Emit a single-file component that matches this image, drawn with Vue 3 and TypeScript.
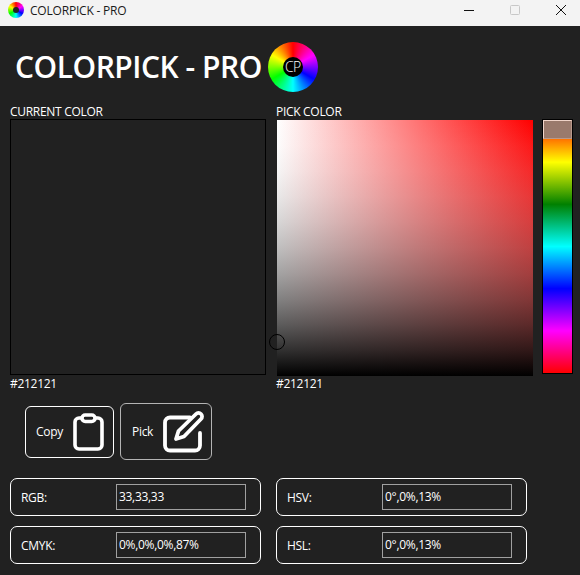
<script setup lang="ts">
const rows = [
  { label: 'RGB:', value: '33,33,33' },
  { label: 'HSV:', value: '0°,0%,13%' },
  { label: 'CMYK:', value: '0%,0%,0%,87%' },
  { label: 'HSL:', value: '0°,0%,13%' },
]
</script>

<template>
  <div class="window">
    <header class="titlebar">
      <span class="app-icon"><span class="app-icon-hole"></span></span>
      <span class="app-name">COLORPICK - PRO</span>
      <div class="controls">
        <svg class="ctl" width="12" height="12" viewBox="0 0 12 12"><path d="M1 6.500h10" stroke="#111" stroke-width="1" fill="none" /></svg>
        <svg class="ctl" width="12" height="12" viewBox="0 0 12 12"><rect x="1.500" y="1.500" width="9" height="9" rx="1" stroke="#c8c8c8" stroke-width="1" fill="none" /></svg>
        <svg class="ctl" width="12" height="12" viewBox="0 0 12 12"><path d="M1 1l10 10M11 1L1 11" stroke="#111" stroke-width="1" fill="none" /></svg>
      </div>
    </header>

    <main class="content">
      <div class="brand">
        <h1>COLORPICK - PRO</h1>
        <div class="wheel"><span class="wheel-core">CP</span></div>
      </div>

      <section class="pickers">
        <div class="col">
          <div class="cap">CURRENT COLOR</div>
          <div class="swatch"></div>
          <div class="hex">#212121</div>
        </div>
        <div class="col col-pick">
          <div class="cap">PICK COLOR</div>
          <div class="square"><span class="cursor"></span></div>
          <div class="hex">#212121</div>
        </div>
        <div class="hue"><span class="hue-thumb"></span></div>
      </section>

      <section class="actions">
        <button class="btn btn-copy">
          <span>Copy</span>
          <svg width="32" height="38" viewBox="0 0 32 38" fill="none" stroke="#fff" stroke-width="3.600" stroke-linejoin="round" stroke-linecap="round">
            <path d="M8 5H6a4 4 0 0 0-4 4v23a4 4 0 0 0 4 4h19a4 4 0 0 0 4-4V9a4 4 0 0 0-4-4h-2" />
            <rect x="9" y="2" width="13" height="6.500" rx="3.200" />
          </svg>
        </button>
        <button class="btn btn-pick">
          <span>Pick</span>
          <svg width="42" height="42" viewBox="0 0 42 42" fill="none" stroke="#fff" stroke-width="3.800" stroke-linejoin="round" stroke-linecap="round">
            <path d="M28 6.500H8a5 5 0 0 0-5 5v23a5 5 0 0 0 5 5h25a5 5 0 0 0 5-5V22" />
            <path d="M34 3a3.500 3.500 0 0 1 5 5L22 25.500 14 28l2.500-8z" />
          </svg>
        </button>
      </section>

      <section class="values">
        <div v-for="row in rows" :key="row.label" class="card">
          <span class="card-label">{{ row.label }}</span>
          <div class="field">{{ row.value }}</div>
        </div>
      </section>
    </main>
  </div>
</template>

<style>
html, body { margin: 0; background: #212121; }
</style>

<style scoped>
.window {
  width: 580px;
  height: 575px;
  overflow: hidden;
  background: #212121;
  color: #fff;
  font-family: "Open Sans", "Noto Sans", sans-serif;
  font-size: 12px;
  letter-spacing: -0.3px;
}
.titlebar {
  height: 26px;
  background: #f3f3f3;
  color: #1a1a1a;
  display: flex;
  align-items: center;
  padding: 0 0 6px 8px;
  box-sizing: border-box;
}
.app-icon {
  width: 16px;
  height: 16px;
  border-radius: 50%;
  background: conic-gradient(#f00, #f0f, #00f, #0ff, #0f0, #ff0, #f00);
  display: flex;
  align-items: center;
  justify-content: center;
}
.app-icon-hole {
  width: 6px;
  height: 6px;
  border-radius: 50%;
  background: #222;
}
.app-name {
  margin-left: 6px;
  font-size: 12px;
  letter-spacing: -0.2px;
}
.controls {
  margin-left: auto;
  display: flex;
  align-items: center;
  gap: 34px;
  padding-right: 13px;
}
.ctl { display: block; }
.content { padding-left: 10px; }
.brand {
  display: flex;
  align-items: center;
  height: 50px;
  margin-top: 16px;
  padding-left: 5px;
  gap: 6px;
}
h1 {
  margin: 0;
  font-size: 30px;
  font-weight: 600;
  line-height: 50px;
  letter-spacing: -0.47px;
  white-space: nowrap;
}
.wheel {
  width: 50px;
  height: 50px;
  border-radius: 50%;
  background: conic-gradient(#f00, #f0f, #00f, #0ff, #0f0, #ff0, #f00);
  display: flex;
  align-items: center;
  justify-content: center;
}
.wheel-core {
  width: 20px;
  height: 20px;
  border-radius: 50%;
  background: #000;
  color: #fff;
  font-size: 14px;
  font-weight: 300;
  letter-spacing: -0.6px;
  line-height: 20px;
  text-align: center;
}
.pickers {
  display: flex;
  margin-top: 12px;
}
.col { width: 256px; }
.col-pick { margin-left: 11px; }
.cap {
  height: 15px;
  line-height: 15px;
  white-space: nowrap;
}
.swatch {
  width: 256px;
  height: 256px;
  box-sizing: border-box;
  border: 1px solid #000;
}
.col-pick .cap { height: 16px; margin-left: -1px; }
.col-pick .hex { height: 16px; line-height: 15px; margin-left: -1px; }
.square {
  position: relative;
  width: 256px;
  height: 256px;
  background:
    linear-gradient(
      to bottom,
      rgba(255, 255, 255, 0),
      rgba(230, 230, 230, 0.1),
      rgba(204, 204, 204, 0.2),
      rgba(179, 179, 179, 0.3),
      rgba(153, 153, 153, 0.4),
      rgba(128, 128, 128, 0.5),
      rgba(102, 102, 102, 0.6),
      rgba(77, 77, 77, 0.7),
      rgba(51, 51, 51, 0.8),
      rgba(26, 26, 26, 0.9),
      #000
    ),
    linear-gradient(to right, #fff, #f00);
}
.cursor {
  position: absolute;
  left: -8px;
  top: 214px;
  width: 14px;
  height: 14px;
  border: 1px solid #000;
  border-radius: 50%;
}
.hex {
  height: 17px;
  line-height: 17px;
}
.hue {
  position: relative;
  width: 29px;
  height: 253px;
  margin: 15px 0 0 9px;
  border: 1px solid #000;
  background: linear-gradient(to bottom, #f00, #ff0 16.67%, #008000 33.33%, #0ff 50%, #00f 66.67%, #f0f 83.33%, #f00);
}
.hue-thumb {
  position: absolute;
  left: 0;
  top: 0;
  width: 29px;
  height: 19px;
  box-sizing: border-box;
  background: #9a7a6c;
  border: 1px solid;
  border-color: #f0d4c8 #b8998c #b8998c #f0d4c8;
}
.actions {
  display: flex;
  align-items: center;
  margin-top: 11px;
  margin-left: 15px;
  gap: 6px;
  height: 57px;
}
.btn {
  box-sizing: border-box;
  display: flex;
  align-items: center;
  background: transparent;
  color: #fff;
  border-radius: 6px;
  font: inherit;
  letter-spacing: inherit;
  padding: 0;
}
.btn-copy {
  width: 89px;
  height: 52px;
  border: 1px solid #fff;
  padding-left: 10px;
  gap: 10px;
}
.btn-pick {
  width: 92px;
  height: 57px;
  border: 1px solid #b4b4b4;
  padding-left: 11px;
  gap: 9px;
}
.values {
  display: grid;
  grid-template-columns: 251px 251px;
  column-gap: 15px;
  row-gap: 10px;
  margin-top: 18px;
}
.card {
  box-sizing: border-box;
  height: 38px;
  border: 1px solid #fff;
  border-radius: 7px;
  display: flex;
  align-items: center;
  padding-left: 10px;
}
.card-label { width: 95px; }
.field {
  box-sizing: border-box;
  width: 130px;
  height: 26px;
  line-height: 24px;
  border: 1px solid #a0a0a0;
  padding-left: 2px;
}
</style>
